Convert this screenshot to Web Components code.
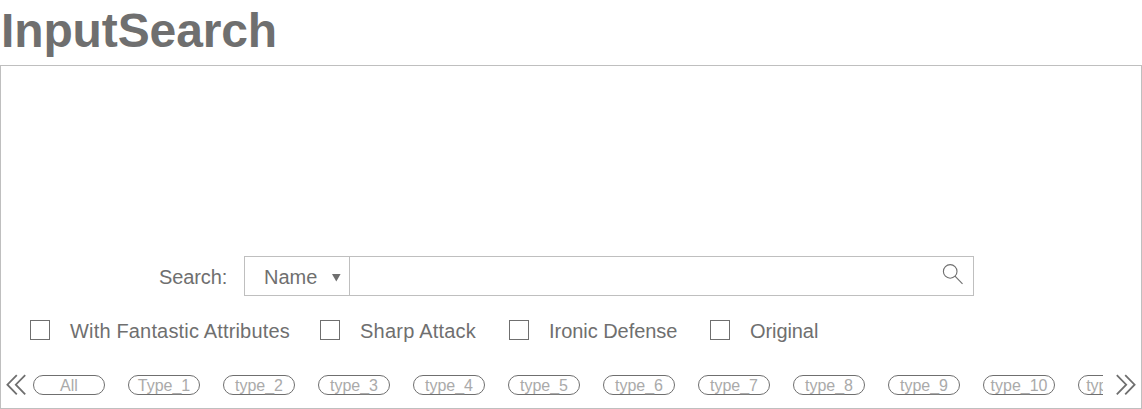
<!DOCTYPE html>
<html lang="en"><head><meta charset="utf-8"><title>InputSearch</title>
<style>
html,body{margin:0;height:100%;overflow:hidden;background:#fff}
body{font-family:"Liberation Sans",Arial,sans-serif;color:#6f6f6f}
</style></head><body>
<search-page></search-page>
<script>
function define(name, markup, setup){
  const template=document.createElement('template');
  template.innerHTML=markup;
  customElements.define(name, class extends HTMLElement{
    constructor(){super();this.attachShadow({mode:'open'}).append(template.content.cloneNode(true));}
    connectedCallback(){if(setup)setup(this,this.shadowRoot);}
  });
}
define('check-option',`<style>
:host{display:flex;align-items:center;height:24px;font-size:20px;flex:none}
.box{width:18px;height:18px;border:1px solid #6f6f6f;margin:0 20px 2px 0;flex:none}
.label{white-space:nowrap;line-height:24px}
</style><span class="box"></span><span class="label"><slot></slot></span>`,(el,root)=>{
  const l=root.querySelector('.label');
  l.style.width=el.getAttribute('label-width')+'px';
  l.style.letterSpacing=el.getAttribute('tracking')+'px';
});
define('type-pill',`<style>
:host{display:block;box-sizing:border-box;flex:none;width:72px;height:20px;border:1px solid #6f6f6f;border-radius:10px;color:#aaa;font-size:16px;line-height:19px;text-align:center;white-space:nowrap}
</style><slot></slot>`);
define('scroll-arrow',`<style>
:host{display:block;width:20px;height:22px;flex:none}
:host([next]){transform:scaleX(-1)}
svg{display:block}
</style><svg width="20" height="22" viewBox="0 0 20 22" fill="none" stroke="#6f6f6f" stroke-width="1.8"><path d="M10.8 1.2 1.4 10.7l9.4 9.6M19.2 1.2 9.8 10.7l9.4 9.6"/></svg>`);
define('type-scroller',`<style>
:host{display:flex;align-items:center;height:22px}
.track{display:flex;gap:23px;width:1070px;overflow:hidden;margin:0 13px 0 7px;flex:none}
</style><scroll-arrow></scroll-arrow><div class="track"><slot></slot></div><scroll-arrow next></scroll-arrow>`);
define('search-field',`<style>
:host{display:flex;align-items:center;height:40px;font-size:20px}
.label{width:85px;letter-spacing:-.1px;line-height:40px;padding-top:2px}
.control{display:flex;box-sizing:border-box;width:730px;height:40px;border:1px solid #bfbfbf}
.select{display:flex;box-sizing:border-box;width:105px;border-right:1px solid #bfbfbf;padding-left:19px;line-height:40px}
.select span{width:68px}
.select svg{margin-top:17px}
.entry{flex:1;display:flex;justify-content:flex-end;padding:7px 9px 0 0}
</style><div class="label">Search:</div><div class="control"><div class="select"><span>Name</span><svg width="9" height="8"><path d="M0 0h8.6L4.3 7.4Z" fill="#6f6f6f"/></svg></div><div class="entry"><svg width="22" height="22" fill="none" stroke="#6f6f6f" stroke-width="1.1"><circle cx="8.2" cy="7.4" r="6.8"/><path d="m13 12.2 7.5 7.6"/></svg></div></div>`);
define('search-page',`<style>
:host{display:block}
h1{margin:0;height:65px;padding-left:1px;font-size:48px;line-height:61px;font-weight:700;letter-spacing:-.12px}
.panel{display:flex;flex-direction:column;box-sizing:border-box;width:1142px;height:344px;border:1px solid #bfbfbf;padding-top:190px}
search-field{margin-left:158px}
.options{display:flex;gap:30px;margin:23px 0 0 29px}
type-scroller{margin:31px 0 0 5px}
</style><h1>InputSearch</h1><div class="panel"><search-field></search-field><div class="options">
<check-option label-width="220" tracking=".17">With Fantastic Attributes</check-option>
<check-option label-width="119" tracking=".22">Sharp Attack</check-option>
<check-option label-width="131" tracking="-.04">Ironic Defense</check-option>
<check-option label-width="70" tracking="-.08">Original</check-option></div>
<type-scroller><type-pill>All</type-pill><type-pill>Type_1</type-pill><type-pill>type_2</type-pill><type-pill>type_3</type-pill><type-pill>type_4</type-pill><type-pill>type_5</type-pill><type-pill>type_6</type-pill><type-pill>type_7</type-pill><type-pill>type_8</type-pill><type-pill>type_9</type-pill><type-pill>type_10</type-pill><type-pill>type_11</type-pill></type-scroller></div>`);
</script></body></html>
